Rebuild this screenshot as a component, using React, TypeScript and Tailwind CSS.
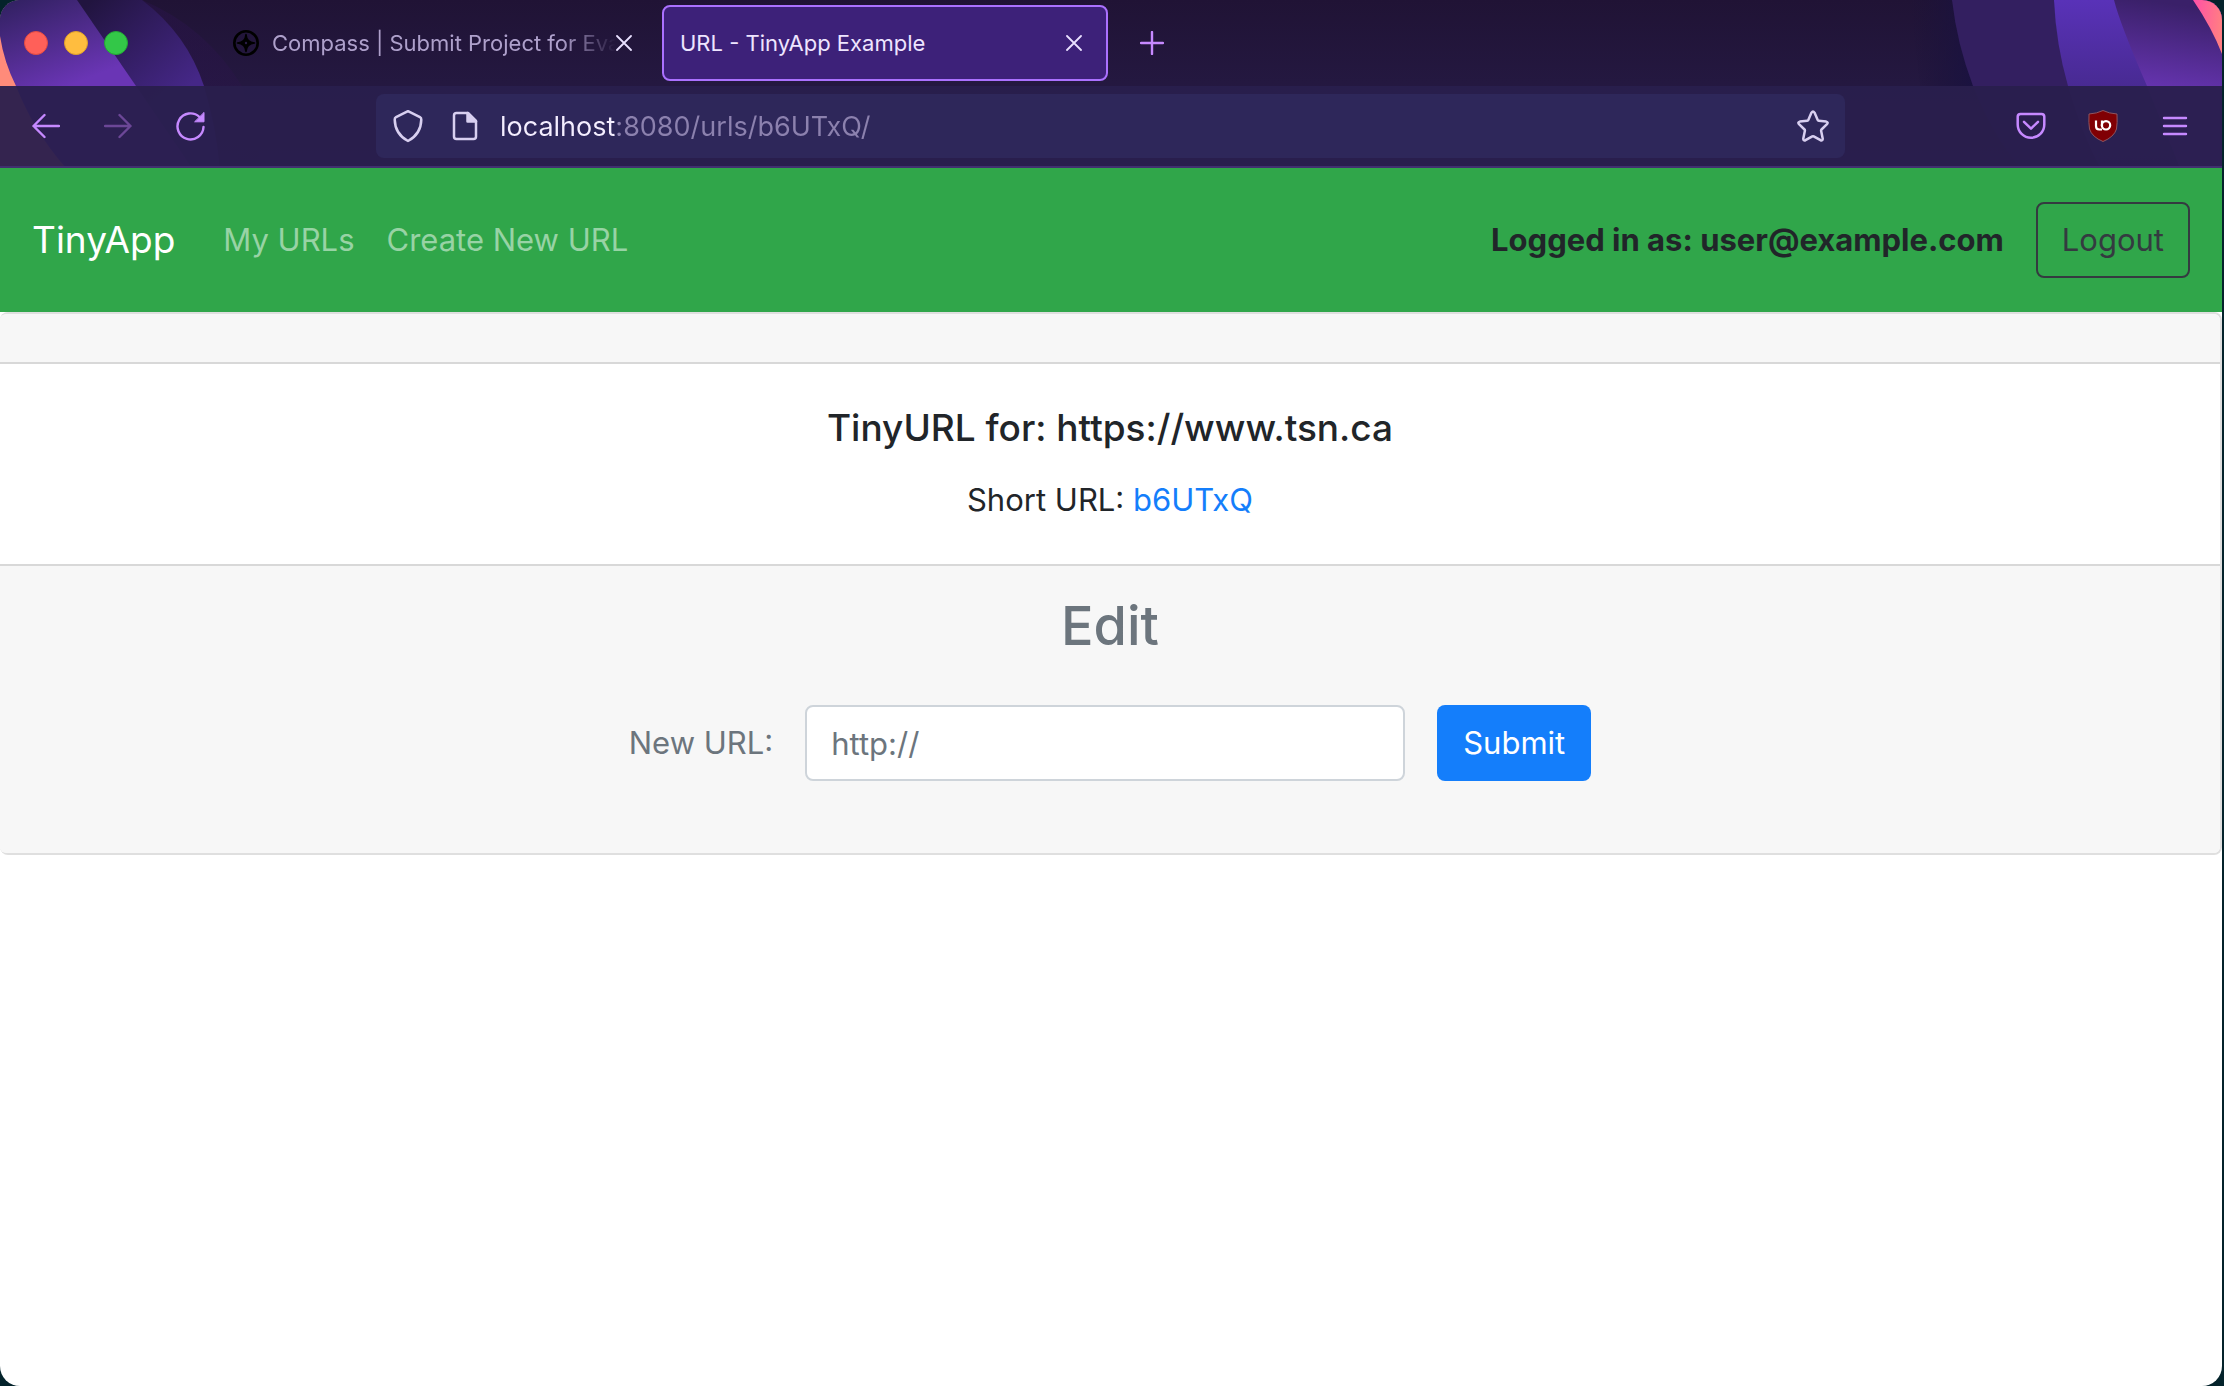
import React from "react";

function ThemeArt() {
  return (
    <>
      <svg className="absolute top-0 left-0" width="320" height="168" viewBox="0 0 320 168" aria-hidden="true">
        <defs>
          <linearGradient id="violet" x1="0" y1="0" x2="0.45" y2="1">
            <stop offset="0" stopColor="#30205f" />
            <stop offset="0.32" stopColor="#512c8f" />
            <stop offset="0.56" stopColor="#6a35b5" />
            <stop offset="1" stopColor="#6a35b5" />
          </linearGradient>
          <linearGradient id="indigo" x1="0.2" y1="0" x2="0.7" y2="0.6">
            <stop offset="0" stopColor="#21143f" />
            <stop offset="1" stopColor="#452787" />
          </linearGradient>
          <linearGradient id="haze" x1="0" y1="0" x2="1" y2="0">
            <stop offset="0" stopColor="#2c1350" />
            <stop offset="1" stopColor="#2a1548" />
          </linearGradient>
        </defs>
        <path d="M142 0 Q205 26 242 86 L262 168 H150 Z" fill="url(#haze)" opacity="0.4" />
        <path d="M60 0 H142 Q187 34 204 86 Q216 126 220 168 H100 Z" fill="url(#indigo)" />
        <path d="M0 0 H77 L136 86 L192 168 H0 Z" fill="url(#violet)" />
        <path d="M0 36 Q4 62 16 86 Q34 132 66 168 H0 Z" fill="#ff8b7a" />
      </svg>
      <svg className="absolute top-0 right-0" width="322" height="168" viewBox="0 0 322 168" aria-hidden="true">
        <defs>
          <linearGradient id="shade" x1="0" y1="0" x2="1" y2="0">
            <stop offset="0" stopColor="#1b1238" stopOpacity="0" />
            <stop offset="1" stopColor="#1a1240" />
          </linearGradient>
          <linearGradient id="royal" x1="0" y1="0" x2="0" y2="1">
            <stop offset="0" stopColor="#5932b8" />
            <stop offset="0.52" stopColor="#482a92" />
            <stop offset="1" stopColor="#3b2480" />
          </linearGradient>
          <linearGradient id="plum" x1="0.3" y1="0" x2="0.2" y2="1">
            <stop offset="0" stopColor="#3a2069" />
            <stop offset="0.52" stopColor="#6634b0" />
            <stop offset="1" stopColor="#6634b0" />
          </linearGradient>
          <linearGradient id="rose" x1="0" y1="0" x2="1" y2="0.2">
            <stop offset="0" stopColor="#ff4fa8" />
            <stop offset="1" stopColor="#ff7d83" />
          </linearGradient>
        </defs>
        <path d="M10 0 H52 L73 86 H20 Z" fill="url(#shade)" />
        <path d="M52 0 Q57 44 73 86 Q92 134 120 168 H322 V0 Z" fill="#331f60" />
        <path d="M154 0 Q156 44 168 86 Q182 134 200 168 H322 V0 Z" fill="url(#royal)" />
        <path d="M214 0 Q220 24 247 86 L280 168 H322 V0 Z" fill="url(#plum)" />
        <path d="M293 0 Q312 28 322 54 V0 Z" fill="url(#rose)" />
      </svg>
    </>
  );
}

function CloseIcon() {
  return (
    <svg width="16" height="16" viewBox="0 0 16 16" fill="none" stroke="#e9e0ff" strokeWidth="1.8" strokeLinecap="round">
      <path d="M1 1 L15 15 M15 1 L1 15" />
    </svg>
  );
}

function TabStrip() {
  return (
    <div className="relative flex h-[86px] items-center">
      <div className="flex w-[220px] shrink-0 gap-4 pl-6">
        <button aria-label="Close window" className="size-6 rounded-full border border-[#e24b41] bg-[#ff6059]" />
        <button aria-label="Minimize window" className="size-6 rounded-full border border-[#e0a028] bg-[#ffbd3f]" />
        <button aria-label="Zoom window" className="size-6 rounded-full border border-[#22a834] bg-[#33c748]" />
      </div>
      <div className="flex w-[442px] shrink-0 items-center pl-3 text-[22px] leading-8 text-[#aea0cb]">
        <button className="flex min-w-0 items-center gap-3 text-left">
          <svg className="shrink-0" width="28" height="28" viewBox="0 0 28 28" aria-hidden="true">
            <circle cx="14" cy="14" r="11.7" fill="none" stroke="#000" strokeWidth="2.6" />
            <path
              d="M14 5.500 Q14.600 13.400 22.500 14 Q14.600 14.600 14 22.500 Q13.400 14.600 5.500 14 Q13.400 13.400 14 5.500 Z"
              fill="#000"
              stroke="#000"
              strokeWidth="1.6"
              strokeLinejoin="round"
            />
            <circle cx="14" cy="14" r="1.2" fill="#2a1d48" />
          </svg>
          <span className="w-[344px] overflow-hidden whitespace-nowrap [mask-image:linear-gradient(to_right,black_84%,transparent)]">
            Compass | Submit Project for Evaluation
          </span>
        </button>
        <button aria-label="Close tab">
          <CloseIcon />
        </button>
      </div>
      <div className="flex h-[76px] w-[446px] shrink-0 items-center justify-between rounded-lg border-2 border-[#ab71ff] bg-[#3d2179] pr-6 pl-4 text-[22px] leading-8 text-[#eee5ff]">
        <button>URL - TinyApp Example</button>
        <button aria-label="Close tab">
          <CloseIcon />
        </button>
      </div>
      <button aria-label="New tab" className="ml-8">
        <svg width="24" height="24" viewBox="0 0 24 24" stroke="#c689ff" strokeWidth="2.4" strokeLinecap="round">
          <path d="M12 1 V23 M1 12 H23" />
        </svg>
      </button>
    </div>
  );
}

function Toolbar() {
  return (
    <div className="relative flex h-[82px] items-center border-b-2 border-[#40306f] bg-[#291f4d]/95 pr-[34px] pl-8">
      <div className="flex w-[344px] shrink-0 items-center gap-11">
        <button aria-label="Back">
          <svg width="28" height="28" viewBox="0 0 28 28" fill="none" stroke="#c689ff" strokeWidth="2.4" strokeLinecap="round" strokeLinejoin="round">
            <path d="M27 14 H1.5 M12.5 3 L1.5 14 L12.5 25" />
          </svg>
        </button>
        <button aria-label="Forward" disabled>
          <svg width="28" height="28" viewBox="0 0 28 28" fill="none" stroke="#6c4797" strokeWidth="2.4" strokeLinecap="round" strokeLinejoin="round">
            <path d="M1 14 H26.5 M15.5 3 L26.5 14 L15.5 25" />
          </svg>
        </button>
        <button aria-label="Reload">
          <svg width="30" height="30" viewBox="0 0 30 30" fill="none" stroke="#c689ff" strokeWidth="2.4" strokeLinecap="round">
            <path d="M27.500 16 A13 13 0 1 1 23.500 6" />
            <path d="M28 1.800 V10.800 H19 Z" fill="#c689ff" strokeWidth="1" strokeLinejoin="round" />
          </svg>
        </button>
      </div>
      <div className="flex h-16 min-w-0 flex-1 items-center rounded-lg bg-[#2e275a] px-4">
        <button aria-label="Tracking protection" className="w-8 shrink-0">
          <svg width="32" height="34" viewBox="0 0 32 34" fill="none" stroke="#d8cff0" strokeWidth="2.5" strokeLinejoin="round">
            <path d="M16 2.2 L28 8.2 Q29.4 8.9 29.3 10.6 Q29 25 16 32 Q3 25 2.7 10.6 Q2.6 8.9 4 8.2 Z" />
          </svg>
        </button>
        <button aria-label="Site information" className="ml-7 shrink-0">
          <svg width="26" height="30" viewBox="0 0 26 30" fill="none" stroke="#d8cff0" strokeWidth="2.5" strokeLinejoin="round">
            <path d="M4.5 2 H16 L24 10 V25.500 Q24 28 21.500 28 H4.500 Q2 28 2 25.500 V4.500 Q2 2 4.500 2 Z" />
            <path d="M15.500 2 V10.500 H24 Z" fill="#d8cff0" />
          </svg>
        </button>
        <input
          aria-label="Address"
          defaultValue="localhost:8080/urls/b6UTxQ/"
          className="ml-[22px] h-12 min-w-0 flex-1 bg-linear-to-r from-[#f4eeff] from-[116px] to-[#8c81ae] to-[116px] bg-clip-text text-[27px] text-transparent outline-none"
        />
        <button aria-label="Bookmark this page" className="shrink-0">
          <svg width="32" height="32" viewBox="0 0 32 32" fill="none" stroke="#d8cff0" strokeWidth="2.5" strokeLinejoin="round">
            <path d="M14.500 2.600 Q16 0.400 17.500 2.600 L20.700 9.900 Q21 10.600 21.800 10.700 L29.200 11.600 Q31.600 12.200 30 14.200 L24.500 19.500 Q24 20 24.100 20.800 L25.700 28.400 Q25.900 31 23.500 30.200 L16.700 26.300 Q16 26 15.300 26.300 L8.500 30.200 Q6.100 31 6.300 28.400 L7.900 20.800 Q8 20 7.500 19.500 L2 14.200 Q0.400 12.200 2.800 11.600 L10.200 10.700 Q11 10.600 11.300 9.900 Z" />
          </svg>
        </button>
      </div>
      <div className="ml-[171px] flex shrink-0 items-center">
        <button aria-label="Save to Pocket">
          <svg width="30" height="28" viewBox="0 0 30 28" fill="none" stroke="#c689ff" strokeWidth="2.500" strokeLinecap="round" strokeLinejoin="round">
            <path d="M4.500 2 H25.500 Q28.300 2 28.300 4.800 V12.500 A13.300 13.300 0 0 1 1.700 12.500 V4.800 Q1.700 2 4.500 2 Z" />
            <path d="M8 9.800 L15 16.600 L22 9.800" />
          </svg>
        </button>
        <button aria-label="uBlock Origin" className="ml-[41px]">
          <svg width="32" height="34" viewBox="0 0 32 34" fill="none">
            <path d="M16 1.500 Q22 4.500 30 5 Q30.500 14 29.500 20 Q27 28 16 32.500 Q5 28 2.500 20 Q1.500 14 2 5 Q10 4.500 16 1.500 Z" fill="#800004" stroke="#8f5560" strokeWidth="1" />
            <path d="M9 11.500 V17 Q9 20.500 12.200 20.500 H15 M15 11.500 V17" stroke="#fff" strokeWidth="2.200" />
            <circle cx="19" cy="16.300" r="4.200" stroke="#fff" strokeWidth="2.200" />
          </svg>
        </button>
        <button aria-label="Open application menu" className="ml-[43px]">
          <svg width="26" height="22" viewBox="0 0 26 22" stroke="#c689ff" strokeWidth="2.400" strokeLinecap="round">
            <path d="M2 3 H24 M2 11 H24 M2 19 H24" />
          </svg>
        </button>
      </div>
    </div>
  );
}

function Navbar() {
  return (
    <nav className="flex h-36 items-center bg-[#30a64a] px-8 text-[31px]">
      <a href="#" className="text-[37px] leading-[60px] text-white">
        TinyApp
      </a>
      <div className="ml-12 flex flex-1 gap-8 text-[#98d3a5]">
        <a href="#">My URLs</a>
        <a href="#">Create New URL</a>
      </div>
      <form className="flex items-center gap-8" onSubmit={(e) => e.preventDefault()}>
        <strong className="font-bold text-[#212529]">Logged in as: user@example.com</strong>
        <button className="h-[76px] rounded-lg border-2 border-[#343a40] px-6 text-[#343a40]">Logout</button>
      </form>
    </nav>
  );
}

function UrlCard() {
  return (
    <main className="rounded-lg border-2 border-l-0 border-[#dfdfdf] bg-white text-center text-[31px] leading-12 text-[#212529]">
      <div className="h-[50px] rounded-t-md border-b-2 border-[#d8d8d8] bg-[#f7f7f7]" />
      <div className="px-10 pt-10 pb-10">
        <h5 className="mb-6 text-[37px] font-medium">TinyURL for: https://www.tsn.ca</h5>
        <p>
          Short URL:{" "}
          <a href="#" className="text-[#147efb]">
            b6UTxQ
          </a>
        </p>
      </div>
      <div className="rounded-b-md border-t-2 border-[#d8d8d8] bg-[#f7f7f7] px-10 pt-6 pb-[72px] text-[#6c757d]">
        <h3 className="mb-[43px] text-[54px] leading-[72px] font-medium">Edit</h3>
        <form className="flex items-center justify-center gap-8" onSubmit={(e) => e.preventDefault()}>
          <label htmlFor="new-url">New URL:</label>
          <input
            id="new-url"
            type="text"
            placeholder="http://"
            className="h-[76px] w-[600px] rounded-lg border-2 border-[#ced4da] bg-white px-6 text-[#495057] placeholder:text-[#6c757d]"
          />
          <button className="h-[76px] rounded-lg bg-[#147efb] px-[26px] text-white">Submit</button>
        </form>
      </div>
    </main>
  );
}

export default function App() {
  return (
    <div className="flex min-h-screen bg-[#04232b] pr-[2px] font-['Inter','Liberation_Sans',sans-serif]">
      <div className="min-w-0 flex-1 overflow-hidden rounded-[20px] bg-white">
        <header className="relative bg-linear-to-b from-[#201335] to-[#281d4c]">
          <ThemeArt />
          <TabStrip />
          <Toolbar />
        </header>
        <Navbar />
        <UrlCard />
      </div>
    </div>
  );
}
